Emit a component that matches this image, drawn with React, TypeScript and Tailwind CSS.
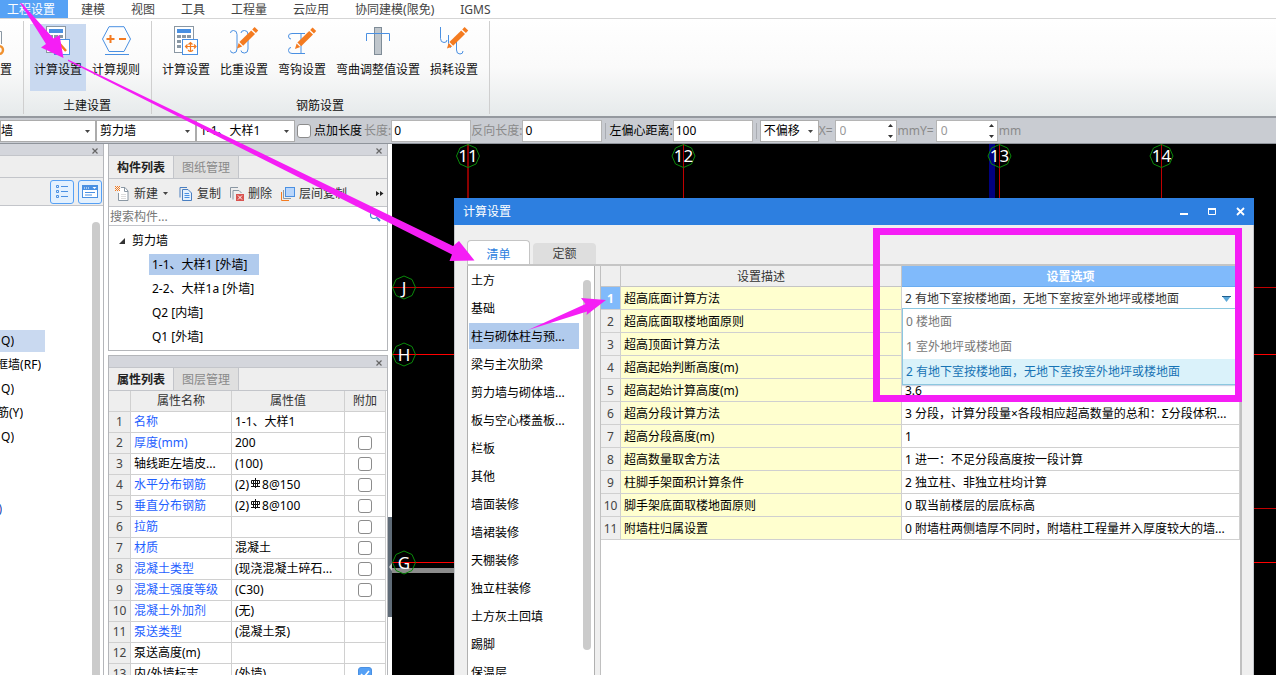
import React from "react";

/* ---------- ribbon icons ---------- */

const iconClass = "h-[30px] w-8 shrink-0";

function Pencil({ x, y }: { x: number; y: number }) {
  return (
    <g transform={`translate(${x} ${y})`}>
      <path d="M0 21.5 L1.6 16 L5.2 19.6 Z" fill="#f47b20" />
      <path d="M2.4 15 L14.2 3.4 L18 7 L6.2 18.8 Z" fill="#f47b20" />
      <path d="M15.2 2.4 L17.6 0 L21.2 3.6 L18.9 6 Z" fill="#f47b20" />
    </g>
  );
}

function CalculatorBase() {
  return (
    <>
      <rect x="4.5" y="0.5" width="19" height="26" fill="#fff" stroke="#8a97a3" />
      <rect x="7" y="3" width="14" height="4" fill="#4a90e2" />
      {[9, 14, 19].map((y) =>
        [7, 12, 17].map((x) => <rect key={`${x}-${y}`} x={x} y={y} width="4" height="3" fill="#8a97a3" />)
      )}
      <rect x="12.5" y="13.5" width="15" height="15" fill="#fff" stroke="#4a90e2" />
    </>
  );
}

function CalcSearchIcon() {
  return (
    <svg className={iconClass} viewBox="0 0 32 30">
      <CalculatorBase />
      <path d="M17 17 L24 25" stroke="#f47b20" strokeWidth="2.5" />
    </svg>
  );
}

function CalcArrowsIcon() {
  return (
    <svg className={iconClass} viewBox="0 0 32 30">
      <CalculatorBase />
      <path
        d="M20.5 16.5 V25 M18.5 18.5 L20.5 16.5 L22.5 18.5 M15.5 20.5 H25.5 M24 18.5 L26 20.5 L24 22.5 M17.5 18.5 L15.5 20.5 L17.5 22.5 M18 24 Q20.5 27 23 24"
        fill="none"
        stroke="#f47b20"
        strokeWidth="1.2"
      />
    </svg>
  );
}

function RuleIcon() {
  return (
    <svg className={iconClass} viewBox="0 0 32 30">
      <path d="M2.5 13 L9 0.7 H24 L30.5 13 L24 25.5 H9 Z" fill="none" stroke="#4a90e2" />
      <path d="M5 28.5 H29" stroke="#4a90e2" />
      <path d="M6.5 13 H14.5 M10.5 9 V17 M19 13 H26" stroke="#f47b20" strokeWidth="2" />
    </svg>
  );
}

function WeightIcon() {
  return (
    <svg className={iconClass} viewBox="0 0 32 30">
      <path
        d="M2.5 7 Q2.5 4.5 5.5 4.5 Q9 4.5 9 8.5 V23 Q9 27 5.5 27 Q2.5 27 2.5 24.5 M13 7 Q13 4.5 16.5 4.5 Q20 4.5 20 8.5 V23 Q20 27 16.5 27 Q13 27 13 24.5"
        fill="none"
        stroke="#4a90e2"
      />
      <Pencil x={9} y={1} />
    </svg>
  );
}

function HookIcon() {
  return (
    <svg className={iconClass} viewBox="0 0 32 30">
      <path
        d="M5 13 Q2.5 13 2.5 10 Q2.5 7.5 6 7.5 H19 M5 21.5 Q2.5 21.5 2.5 24.5 Q2.5 27.5 6 27.5 H19 M15 7.5 V27.5"
        fill="none"
        stroke="#4a90e2"
      />
      <Pencil x={9} y={1.5} />
    </svg>
  );
}

function BendIcon() {
  return (
    <svg className={iconClass} viewBox="0 0 32 30">
      <rect x="12.5" y="1.5" width="7" height="27" fill="#bfc6cc" stroke="#7f8c97" />
      <path d="M4.5 15 V7.5 H27.5 V15" fill="none" stroke="#4a90e2" />
    </svg>
  );
}

function LossIcon() {
  return (
    <svg className={iconClass} viewBox="0 0 32 30">
      <path
        d="M2.5 1 V12.5 Q2.5 16.5 6 16.5 Q9 16.5 9 14 M10.5 9 V17.5 Q10.5 21.5 13 21.5 M18.5 14 V24 Q18.5 28 22 28 Q25 28 25 25"
        fill="none"
        stroke="#4a90e2"
      />
      <Pencil x={9} y={1} />
    </svg>
  );
}

/* ---------- shared controls ---------- */

function Caret({ className = "" }: { className?: string }) {
  return (
    <svg className={`h-[3px] w-[5px] ${className}`} viewBox="0 0 5 3">
      <path d="M0 0 H5 L2.5 3 Z" fill="#444" />
    </svg>
  );
}

function BarSelect({ label, value, width, pad }: { label: string; value: string; width: string; pad: string }) {
  return (
    <div className={`relative h-[22px] shrink-0 ${width}`}>
      <select
        aria-label={label}
        className={`block h-full w-full appearance-none border border-[#acacac] bg-white leading-5 outline-none ${pad}`}
      >
        <option>{value}</option>
      </select>
      <Caret className="pointer-events-none absolute right-1.5 top-[10px]" />
    </div>
  );
}

function BarField({ label, value, muted = false }: { label: string; value: string; muted?: boolean }) {
  return (
    <label className={`flex shrink-0 items-center ${muted ? "text-[#8a8a8a]" : "text-black"}`}>
      <span className="whitespace-nowrap">{label}</span>
      <input
        defaultValue={value}
        className="h-[22px] w-20 border border-[#b5b5b5] bg-white px-0.5 leading-5 text-black outline-none"
      />
    </label>
  );
}

function SpinField({ label, unit }: { label: string; unit: string }) {
  return (
    <div className="flex shrink-0 items-center text-[#8a8a8a]">
      <label className="flex items-center">
        <span className="pr-0.5">{label}</span>
        <span className="relative">
          <input
            defaultValue="0"
            className="block h-[22px] w-[62px] border border-[#b5b5b5] bg-white px-1 leading-5 text-[#999] outline-none"
          />
          <svg className="pointer-events-none absolute right-1 top-1 h-[14px] w-[5px]" viewBox="0 0 5 14">
            <path d="M0 3 L2.5 0 L5 3 Z M0 11 L2.5 14 L5 11 Z" fill="#333" />
          </svg>
        </span>
      </label>
      <span className="pl-px">{unit}</span>
    </div>
  );
}

function Check({ label, checked = false }: { label: string; checked?: boolean }) {
  return (
    <span className="inline-grid align-top">
      <input
        type="checkbox"
        aria-label={label}
        defaultChecked={checked}
        className="col-start-1 row-start-1 size-[14px] appearance-none rounded-[3px] border border-[#8c8c8c] bg-white checked:border-[#4a90e2] checked:bg-[#55a0f5]"
      />
      {checked && (
        <svg className="pointer-events-none col-start-1 row-start-1 size-[14px]" viewBox="0 0 14 14">
          <path d="M3 7 L6 10 L11 4" fill="none" stroke="#fff" strokeWidth="1.6" />
        </svg>
      )}
    </span>
  );
}

function CloseMark() {
  return (
    <svg className="size-1.5" viewBox="0 0 6 6">
      <path d="M0.5 0.5 L5.5 5.5 M5.5 0.5 L0.5 5.5" stroke="#666" strokeWidth="1.2" />
    </svg>
  );
}

function PanelTitle() {
  return (
    <div className="flex h-3 shrink-0 items-center justify-end border-b border-[#c3c5ca] bg-[#d4d6dc] pr-[5px]">
      <button aria-label="关闭" className="pt-0.5">
        <CloseMark />
      </button>
    </div>
  );
}

function PanelTabs({ active, other }: { active: string; other: string }) {
  return (
    <div className="flex h-[23px] shrink-0 border-b border-[#c3c5ca] bg-[#eeeeee] leading-5">
      <button className="border-r border-[#c3c5ca] px-2 pt-px font-bold text-[#222]">{active}</button>
      <button className="border-r border-[#c3c5ca] bg-[#dfdfdf] px-2 pt-px text-[#8a8a8a]">{other}</button>
    </div>
  );
}

/* ---------- ribbon ---------- */

const menu = ["建模", "视图", "工具", "工程量", "云应用", "协同建模(限免)", "IGMS"];

function MenuBar() {
  return (
    <nav className="flex h-[19px] shrink-0 border-b border-[#d5d5d5] bg-white leading-4 text-[#444]">
      <button className="bg-[#56a2f5] pl-[7px] pr-[13px] pt-0.5 text-white">工程设置</button>
      {menu.map((m) => (
        <button key={m} className="px-[13px] pt-0.5">
          {m}
        </button>
      ))}
    </nav>
  );
}

function RibbonItem({ label, icon, active = false }: { label: string; icon: React.ReactNode; active?: boolean }) {
  return (
    <button
      className={`mx-px flex h-[67px] flex-col items-center gap-[5px] px-1 pt-0.5 leading-[18px] ${
        active ? "bg-[#c9d9f0]" : ""
      }`}
    >
      {icon}
      <span className="whitespace-nowrap">{label}</span>
    </button>
  );
}

function RibbonGroup({ label, children }: { label: string; children: React.ReactNode }) {
  return (
    <div className="my-0.5 flex flex-col items-center border-r border-[#cfcfcf] pl-[5px] pr-1.5 pt-[3px]">
      <div className="flex">{children}</div>
      <div className="pt-1.5 leading-[18px]">{label}</div>
    </div>
  );
}

function Ribbon() {
  return (
    <div className="flex h-[99px] shrink-0 border-b-2 border-[#95999f] bg-linear-to-b from-white via-[#fafafa] to-[#e6eaeb] text-[#111]">
      <div className="my-0.5 w-6 border-r border-[#cfcfcf] pt-[5px]">
        <svg className="block h-[30px] w-3" viewBox="0 0 12 30">
          <path d="M0 5.5 H1.5 V18" fill="none" stroke="#8a97a3" />
          <circle cx="-1" cy="24" r="4" fill="none" stroke="#f0912f" strokeWidth="2.4" />
        </svg>
        <div className="pt-[5px] leading-[18px]">置</div>
      </div>
      <RibbonGroup label="土建设置">
        <RibbonItem active label="计算设置" icon={<CalcSearchIcon />} />
        <RibbonItem label="计算规则" icon={<RuleIcon />} />
      </RibbonGroup>
      <RibbonGroup label="钢筋设置">
        <RibbonItem label="计算设置" icon={<CalcArrowsIcon />} />
        <RibbonItem label="比重设置" icon={<WeightIcon />} />
        <RibbonItem label="弯钩设置" icon={<HookIcon />} />
        <RibbonItem label="弯曲调整值设置" icon={<BendIcon />} />
        <RibbonItem label="损耗设置" icon={<LossIcon />} />
      </RibbonGroup>
    </div>
  );
}

function OptionBar() {
  return (
    <div className="flex h-[26px] shrink-0 items-center overflow-hidden border-b border-[#8f949b] bg-[#c9ccd2]">
      <BarSelect label="构件大类" value="墙" width="w-24" pad="pl-0" />
      <BarSelect label="构件类型" value="剪力墙" width="w-[100px]" pad="pl-[3px]" />
      <BarSelect label="构件" value="1-1、大样1" width="w-[99px]" pad="pl-[3px]" />
      <label className="flex shrink-0 items-center gap-[3px] px-0.5">
        <Check label="点加长度" />
        <span>点加长度</span>
      </label>
      <BarField label="长度:" value="0" muted />
      <BarField label="反向长度:" value="0" muted />
      <div className="mx-[3px] h-4 w-px shrink-0 bg-[#a9acb2]" />
      <BarField label="左偏心距离:" value="100" />
      <div className="mx-[3px] h-4 w-px shrink-0 bg-[#a9acb2]" />
      <BarSelect label="偏移" value="不偏移" width="w-[59px]" pad="pl-[3px]" />
      <SpinField label="X=" unit="mm" />
      <SpinField label="Y=" unit="mm" />
    </div>
  );
}

/* ---------- left navigation ---------- */

const navRows = [
  { text: "Q)", width: "w-[14px]", row: "bg-[#c9d9f0]" },
  { text: "框墙(RF)", width: "w-[41px]", row: "" },
  { text: "Q)", width: "w-[14px]", row: "" },
  { text: "筋(Y)", width: "w-[23px]", row: "" },
  { text: "Q)", width: "w-[14px]", row: "" },
];

function NavPanel() {
  return (
    <aside className="flex w-[104px] shrink-0 flex-col border-r border-[#b4b6ba] bg-white">
      <PanelTitle />
      <div className="h-[22px] shrink-0 border-b border-[#c3c5ca] bg-[#eeeeee]" />
      <div className="flex h-7 shrink-0 items-center justify-end gap-1 border-b border-[#c3c5ca] bg-[#eeeeee] pr-px">
        <button aria-label="列表" className="rounded-[3px] border border-[#55a0f5] bg-[#e4f1fe] p-[3px]">
          <svg className="h-4 w-4" viewBox="0 0 16 16">
            <path
              d="M2.5 1.5h2v2h-2z M2.5 6.5h2v2h-2z M2.5 11.5h2v2h-2z M7 2.5H14 M7 7.5H14 M7 12.5H14"
              fill="none"
              stroke="#4a90e2"
            />
          </svg>
        </button>
        <button aria-label="窗口" className="rounded-[3px] border border-[#55a0f5] bg-[#e4f1fe] p-[3px]">
          <svg className="h-4 w-4" viewBox="0 0 16 16">
            <rect x="0.5" y="1.5" width="15" height="12" fill="#fff" stroke="#4a90e2" />
            <rect x="1" y="2" width="14" height="4" fill="#4a90e2" />
            <path d="M2 4h1 M4 4h1 M6 4h1" stroke="#fff" />
            <path d="M10.5 3h4l-2 2z" fill="#fff" />
            <path d="M3 8.5H13 M3 11H10" stroke="#4a90e2" />
          </svg>
        </button>
      </div>
      <div className="flex min-h-0 flex-1 overflow-hidden">
        <div className="min-w-0 flex-1 pt-[124px]">
          {navRows.map((r, i) => (
            <div key={i} className="h-6 leading-[22px]">
              <div className={`h-[22px] w-[45px] ${r.row}`}>
                <div className={`flex h-full justify-end overflow-hidden whitespace-nowrap ${r.width}`}>{r.text}</div>
              </div>
            </div>
          ))}
          <div className="box-content flex h-6 w-[2px] justify-end overflow-hidden pt-12 leading-[22px] text-[#1b3fae]">
            )
          </div>
        </div>
        <div className="mr-[3px] mt-4 w-2 rounded-t-full bg-[#cbcbcb]" />
      </div>
    </aside>
  );
}

/* ---------- component list ---------- */

const components = ["1-1、大样1 [外墙]", "2-2、大样1a [外墙]", "Q2 [内墙]", "Q1 [外墙]"];

function ComponentPanel() {
  return (
    <section className="flex h-[207px] shrink-0 flex-col border-x border-b border-[#b4b6ba] bg-white">
      <PanelTitle />
      <PanelTabs active="构件列表" other="图纸管理" />
      <div className="flex h-7 shrink-0 items-center border-b border-[#c3c5ca] bg-[#eeeeee] pl-1.5 pr-[3px] pt-0.5 text-[#333]">
        <button className="flex items-center gap-[5px]">
          <svg className="h-4 w-[14px]" viewBox="0 0 14 16">
            <path d="M3.5 7 V14.5 H13 V5 L10 1.5 H6" fill="#fff" stroke="#8a97a3" />
            <path d="M9.5 2 V5.5 H13" fill="none" stroke="#8a97a3" />
            <path
              d="M0 0h1v1H0z M2 0h1v1H2z M4 0h1v1H4z M1 1h1v1H1z M3 1h1v1H3z M0 2h1v1H0z M2 2h1v1H2z M4 2h1v1H4z M1 3h1v1H1z M3 3h1v1H3z M0 4h1v1H0z M2 4h1v1H2z M4 4h1v1H4z"
              fill="#f47b20"
            />
            <path d="M6 8.5H11 M6 10.5H11 M6 12.5H11" stroke="#ddd" />
          </svg>
          新建
          <Caret className="mr-1" />
        </button>
        <button className="flex items-center gap-1 pl-[7px]">
          <svg className="h-4 w-[14px]" viewBox="0 0 14 16">
            <path d="M1 11.5 V1.5 H8" fill="none" stroke="#4a7fc1" />
            <path d="M3.5 3.5 H9 L12.5 7 V14.5 H3.5 Z" fill="#e4f1fe" stroke="#4a7fc1" />
            <path d="M5.5 7.5H10 M5.5 9.5H10.5 M5.5 11.5H10.5" stroke="#4a90e2" />
          </svg>
          复制
        </button>
        <button className="flex items-center gap-1 pl-[9px]">
          <svg className="h-4 w-[14px]" viewBox="0 0 14 16">
            <path d="M1 11.5 H0.5 V1.5 H8 M3 13.5 V4.5 H9 L11.5 7" fill="none" stroke="#8a97a3" />
            <rect x="6" y="8" width="8" height="7" fill="#d9534f" />
            <path d="M8 9.5 L12 13.5 M12 9.5 L8 13.5" stroke="#fff" />
          </svg>
          删除
        </button>
        <button className="flex items-center gap-1 pl-[9px]">
          <svg className="h-4 w-[14px]" viewBox="0 0 14 16">
            <path d="M0.5 6 V14.5 H8" fill="none" stroke="#f47b20" />
            <path d="M2.5 4 V12.5 H10" fill="none" stroke="#8a97a3" />
            <rect x="4.5" y="1.5" width="9" height="9" fill="#b9d6fb" stroke="#4a90e2" />
          </svg>
          层间复制
        </button>
        <button aria-label="更多" className="ml-auto">
          <svg className="h-[5px] w-2" viewBox="0 0 8 5">
            <path d="M0 0 L3.5 2.5 L0 5 Z M4 0 L7.5 2.5 L4 5 Z" fill="#222" />
          </svg>
        </button>
      </div>
      <div className="flex h-[19px] shrink-0 items-center border-b border-[#c3c5ca]">
        <input
          aria-label="搜索构件"
          placeholder="搜索构件..."
          className="min-w-0 flex-1 px-px pt-0.5 leading-4 outline-none placeholder:text-[#777]"
        />
        <svg className="mr-1.5 size-3" viewBox="0 0 12 12">
          <circle cx="5" cy="5" r="3.5" fill="none" stroke="#3b8ad0" strokeWidth="1.2" />
          <path d="M8 8 L11 11" stroke="#3b8ad0" strokeWidth="2" />
        </svg>
      </div>
      <div className="pt-[3px]">
        <div className="flex h-[23px] items-center gap-[7px] pl-2.5 leading-[23px]">
          <svg className="size-1.5" viewBox="0 0 6 6">
            <path d="M6 0 V6 H0 Z" fill="#333" />
          </svg>
          剪力墙
        </div>
        <ul>
          {components.map((c, i) => (
            <li key={c} className="flex h-6 items-center pl-10">
              <span className={`h-[21px] whitespace-pre pl-[3px] leading-[21px] ${i === 0 ? "bg-[#b1cbed] pr-3" : ""}`}>
                {c}
              </span>
            </li>
          ))}
        </ul>
      </div>
    </section>
  );
}

/* ---------- property table ---------- */

type Prop = { name: string; value: React.ReactNode; link?: boolean; box?: boolean; on?: boolean };

function Rebar() {
  return (
    <svg className="mx-0.5 inline-block h-2.5 w-[9px] align-[1px]" viewBox="0 0 9 10">
      <path d="M4.5 0 V10 M2.5 2.5 V8 M6.5 2.5 V8 M0.5 2.5 H8.5 V5.5 H0.5 Z M0 8.5 H9" fill="none" stroke="#111" />
    </svg>
  );
}

const props: Prop[] = [
  { name: "名称", value: "1-1、大样1", link: true },
  { name: "厚度(mm)", value: "200", link: true, box: true },
  { name: "轴线距左墙皮...", value: "(100)", box: true },
  { name: "水平分布钢筋", value: <>(2)<Rebar />8@150</>, link: true, box: true },
  { name: "垂直分布钢筋", value: <>(2)<Rebar />8@100</>, link: true, box: true },
  { name: "拉筋", value: "", link: true, box: true },
  { name: "材质", value: "混凝土", link: true, box: true },
  { name: "混凝土类型", value: "(现浇混凝土碎石...", link: true, box: true },
  { name: "混凝土强度等级", value: "(C30)", link: true, box: true },
  { name: "混凝土外加剂", value: "(无)", link: true },
  { name: "泵送类型", value: "(混凝土泵)", link: true },
  { name: "泵送高度(m)", value: "" },
  { name: "内/外墙标志", value: "(外墙)", box: true, on: true },
];

function PropertyPanel() {
  const cell = "h-[21px] border-b border-r border-[#d0d0d0] p-0 leading-5";
  return (
    <section className="mt-1 flex min-h-0 flex-1 flex-col overflow-hidden border-x border-t border-[#b4b6ba] bg-white">
      <PanelTitle />
      <PanelTabs active="属性列表" other="图层管理" />
      <table className="mr-px table-fixed border-separate border-spacing-0 whitespace-nowrap">
        <colgroup>
          <col className="w-[22px]" />
          <col className="w-[101px]" />
          <col className="w-[113px]" />
          <col className="w-[41px]" />
        </colgroup>
        <thead className="bg-[#eeeeee] text-[#333]">
          <tr>
            <th className={cell} />
            <th className={`${cell} font-normal`}>属性名称</th>
            <th className={`${cell} font-normal`}>属性值</th>
            <th className={`${cell} font-normal`}>附加</th>
          </tr>
        </thead>
        <tbody>
          {props.map((p, i) => (
            <tr key={p.name}>
              <td className={`${cell} bg-[#eeeeee] text-center text-[#444]`}>{i + 1}</td>
              <td className={`${cell} pl-[3px]! ${p.link ? "text-[#1f5fff]" : ""}`}>{p.name}</td>
              <td className={`${cell} pl-[3px]!`}>{p.value}</td>
              <td className={cell}>
                {p.box && (
                  <div className="flex h-5 items-center justify-center">
                    <Check label={`附加 ${p.name}`} checked={p.on} />
                  </div>
                )}
              </td>
            </tr>
          ))}
        </tbody>
      </table>
    </section>
  );
}

/* ---------- drawing canvas ---------- */

const columnAxes = [
  { label: "11", x: 76, color: "#8b0000", w: 2 },
  { label: "12", x: 291.5, color: "#c00000", w: 1 },
  { label: "13", x: 607.5, color: "#c00000", w: 1 },
  { label: "14", x: 769.5, color: "#c00000", w: 1 },
];
const rowAxes = [
  { label: "J", y: 143, color: "#c00000" },
  { label: "H", y: 210, color: "#ff0000" },
  { label: "G", y: 418, color: "#ff0000" },
];

function Bubble({ x, y, label }: { x: number; y: number; label: string }) {
  return (
    <>
      <path
        d="M0 -11.5 L8 -8 L11.5 0 L8 8 L0 11.5 L-8 8 L-11.5 0 L-8 -8 Z"
        transform={`translate(${x} ${y})`}
        fill="none"
        stroke="#0a8a0a"
      />
      <text x={x} y={y + 6} textAnchor="middle" fontSize="17" fill="#fff">
        {label}
      </text>
    </>
  );
}

function AxisGrid() {
  return (
    <svg className="absolute inset-0 h-full w-full">
      <rect x="597" y="0" width="6" height="60" fill="#00007f" />
      {columnAxes.map((a) => (
        <line key={a.label} x1={a.x} x2={a.x} y1="0" y2="60" stroke={a.color} strokeWidth={a.w} />
      ))}
      {rowAxes.map((a) => (
        <line key={a.label} x1="0" x2="100%" y1={a.y + 0.5} y2={a.y + 0.5} stroke={a.color} />
      ))}
      <line x1="800" x2="100%" y1="364.5" y2="364.5" stroke="#c00000" />
      <rect x="0" y="424" width="62" height="5" fill="#8c8c8c" />
      {columnAxes.map((a) => (
        <Bubble key={a.label} x={a.x} y={12} label={a.label} />
      ))}
      {rowAxes.map((a) => (
        <Bubble key={a.label} x={12} y={a.y + 0.5} label={a.label} />
      ))}
    </svg>
  );
}

/* ---------- calculation settings dialog ---------- */

const categories = [
  "土方",
  "基础",
  "柱与砌体柱与预...",
  "梁与主次肋梁",
  "剪力墙与砌体墙...",
  "板与空心楼盖板...",
  "栏板",
  "其他",
  "墙面装修",
  "墙裙装修",
  "天棚装修",
  "独立柱装修",
  "土方灰土回填",
  "踢脚",
  "保温层",
];

const choices = ["0 楼地面", "1 室外地坪或楼地面", "2 有地下室按楼地面，无地下室按室外地坪或楼地面"];

const settings = [
  ["超高底面计算方法", ""],
  ["超高底面取楼地面原则", ""],
  ["超高顶面计算方法", ""],
  ["超高起始判断高度(m)", ""],
  ["超高起始计算高度(m)", "3.6"],
  ["超高分段计算方法", "3 分段，计算分段量×各段相应超高数量的总和：Σ分段体积..."],
  ["超高分段高度(m)", "1"],
  ["超高数量取舍方法", "1 进一：不足分段高度按一段计算"],
  ["柱脚手架面积计算条件", "2 独立柱、非独立柱均计算"],
  ["脚手架底面取楼地面原则", "0 取当前楼层的层底标高"],
  ["附墙柱归属设置", "0 附墙柱两侧墙厚不同时，附墙柱工程量并入厚度较大的墙..."],
];

function ChoicePicker() {
  return (
    <div className="relative">
      <select
        aria-label="超高底面计算方法"
        defaultValue={choices[2]}
        className="block h-[22px] w-full appearance-none bg-white pl-[3px] pt-0.5 leading-5 text-[#333] outline-none"
      >
        {choices.map((c) => (
          <option key={c}>{c}</option>
        ))}
      </select>
      <svg className="pointer-events-none absolute right-2 top-[9px] h-[6px] w-[9px]" viewBox="0 0 9 6">
        <path d="M0 0 H9 L4.5 6 Z" fill="#5aa7d8" />
        <path d="M0 0.5 H9" stroke="#1f5f8f" />
      </svg>
      <ul
        role="listbox"
        aria-label="可选项"
        className="absolute left-0 right-0 top-[21px] z-10 border border-[#8cc8e0] bg-white leading-[25px] text-[#777] shadow-[0_1px_1px_#cdd5e5]"
      >
        {choices.map((c, i) => (
          <li
            key={c}
            role="option"
            aria-selected={i === 2}
            className={`h-[25px] pl-[3px] ${i === 2 ? "bg-[#daf2fa] text-[#1673b5]" : ""}`}
          >
            {c}
          </li>
        ))}
      </ul>
    </div>
  );
}

function SettingsTable() {
  const cell = "h-[23px] border-b border-r border-[#d0d0d0]";
  const text = "pt-0.5 pb-0 pr-0 leading-5";
  const head = "h-[21px] border-b border-r p-0 pt-0.5 leading-[18px]";
  return (
    <table className="w-full table-fixed border-separate border-spacing-0 whitespace-nowrap">
      <colgroup>
        <col className="w-5" />
        <col className="w-[281px]" />
        <col />
      </colgroup>
      <thead className="bg-[#efefef] text-[#333]">
        <tr>
          <th className={`${head} border-[#c5c5c5]`} />
          <th className={`${head} border-[#c5c5c5] font-normal`}>设置描述</th>
          <th className={`${head} border-[#6aacf0] bg-[#80bafb] font-bold text-white`}>设置选项</th>
        </tr>
      </thead>
      <tbody>
        {settings.map(([name, value], i) => (
          <tr key={name}>
            <td
              className={`${cell} ${text} pl-0 text-center ${
                i === 0 ? "bg-[#80bafb] font-bold text-white" : "bg-[#efefef] text-[#444]"
              }`}
            >
              {i + 1}
            </td>
            <td className={`${cell} ${text} bg-[#ffffcf] pl-[3px]`}>{name}</td>
            {i === 0 ? (
              <td className={`${cell} p-0`}>
                <ChoicePicker />
              </td>
            ) : (
              <td className={`${cell} ${text} pl-[3px]`}>{value}</td>
            )}
          </tr>
        ))}
      </tbody>
    </table>
  );
}

function SettingsDialog() {
  return (
    <div
      role="dialog"
      aria-label="计算设置"
      className="absolute bottom-0 left-[62px] right-[22px] top-[54px] flex flex-col overflow-hidden bg-[#efefef]"
    >
      <header className="flex h-[27px] shrink-0 items-center bg-[#2d7fe0] pl-[9px] pr-[9px] text-white">
        <h2 className="flex-1">计算设置</h2>
        <div className="flex items-center gap-[19px]">
          <button aria-label="最小化">
            <svg className="h-[9px] w-[9px]" viewBox="0 0 9 9">
              <path d="M0 7 H8" stroke="#fff" strokeWidth="2" />
            </svg>
          </button>
          <button aria-label="最大化">
            <svg className="h-[9px] w-[9px]" viewBox="0 0 9 9">
              <path d="M0.5 1 V7.5 H7.5 V1" fill="none" stroke="#fff" />
              <path d="M0 2 H8" stroke="#fff" strokeWidth="2" />
            </svg>
          </button>
          <button aria-label="关闭">
            <svg className="h-[9px] w-[9px]" viewBox="0 0 9 9">
              <path d="M1 1 L8 8 M8 1 L1 8" stroke="#fff" strokeWidth="1.8" />
            </svg>
          </button>
        </div>
      </header>
      <div className="flex min-h-0 flex-1 flex-col border-x border-[#c5c8cc] pl-3 pr-[11px] pt-[15px]">
        <div className="flex shrink-0 items-end gap-[3px] border-b-2 border-[#c5c5c5] leading-5">
          <button className="h-6 w-[63px] rounded-t-[4px] border-x border-t border-[#c5c5c5] bg-white pt-1 text-[#2d7fe0]">
            清单
          </button>
          <button className="h-[21px] w-[63px] rounded-t-[4px] bg-[#dedede] pt-px text-[#444]">定额</button>
        </div>
        <div className="flex min-h-0 flex-1 gap-[5px]">
          <div className="flex w-32 shrink-0 overflow-hidden border-x border-[#b0b0b0] bg-white">
            <ul className="flex-1 pl-px">
              {categories.map((c, i) => (
                <li key={c} className="flex h-7 items-center">
                  <span
                    className={`h-[26px] w-[110px] whitespace-nowrap pl-0.5 pt-0.5 leading-6 ${i === 2 ? "bg-[#b1cbed]" : ""}`}
                  >
                    {c}
                  </span>
                </li>
              ))}
            </ul>
            <div className="mr-[3px] mt-3.5 h-[370px] w-2 rounded-full bg-[#cbcbcb]" />
          </div>
          <div className="min-w-0 flex-1 border-l border-r-2 border-[#c0c0c0] bg-white">
            <SettingsTable />
          </div>
        </div>
      </div>
    </div>
  );
}

/* ---------- annotations over the window ---------- */

function Annotations() {
  return (
    <svg className="pointer-events-none absolute left-0 top-0 z-20 h-[675px] w-[1276px]" viewBox="0 0 1276 675">
      <g fill="#f51ef5">
        <path d="M20 3 L22 3.5 L53.5 38.5 L59.5 35 L63.5 58 L41 47.5 L46 44 Z" />
        <path d="M68 59.5 L453 246 L459 241 L474.5 260.5 L449.5 261 L452 254.5 L68 61 Z" />
        <path d="M528 330 L585.5 304 L581 298 L606 300 L586.5 315 L587 311.5 Z" />
      </g>
      <rect x="876.5" y="231.5" width="362" height="167" fill="none" stroke="#f51ef5" strokeWidth="7" />
    </svg>
  );
}

export default function App() {
  return (
    <div
      lang="zh-CN"
      className="relative flex h-screen flex-col overflow-hidden bg-white font-['Noto_Sans','Noto_Sans_CJK_SC',sans-serif] text-xs text-black"
    >
      <MenuBar />
      <Ribbon />
      <OptionBar />
      <main className="flex min-h-0 flex-1">
        <NavPanel />
        <div className="ml-1 flex w-[280px] shrink-0 flex-col">
          <ComponentPanel />
          <PropertyPanel />
        </div>
        <div className="w-1 shrink-0 pt-[373px]">
          <svg className="h-[100px] w-1" viewBox="0 0 4 100">
            <rect width="4" height="100" fill="#5f6b77" />
            <path d="M4 46 L1 50 L4 54 Z" fill="#d0d0d0" />
          </svg>
        </div>
        <div className="relative min-w-0 flex-1 overflow-hidden bg-black">
          <AxisGrid />
          <SettingsDialog />
        </div>
      </main>
      <Annotations />
    </div>
  );
}
